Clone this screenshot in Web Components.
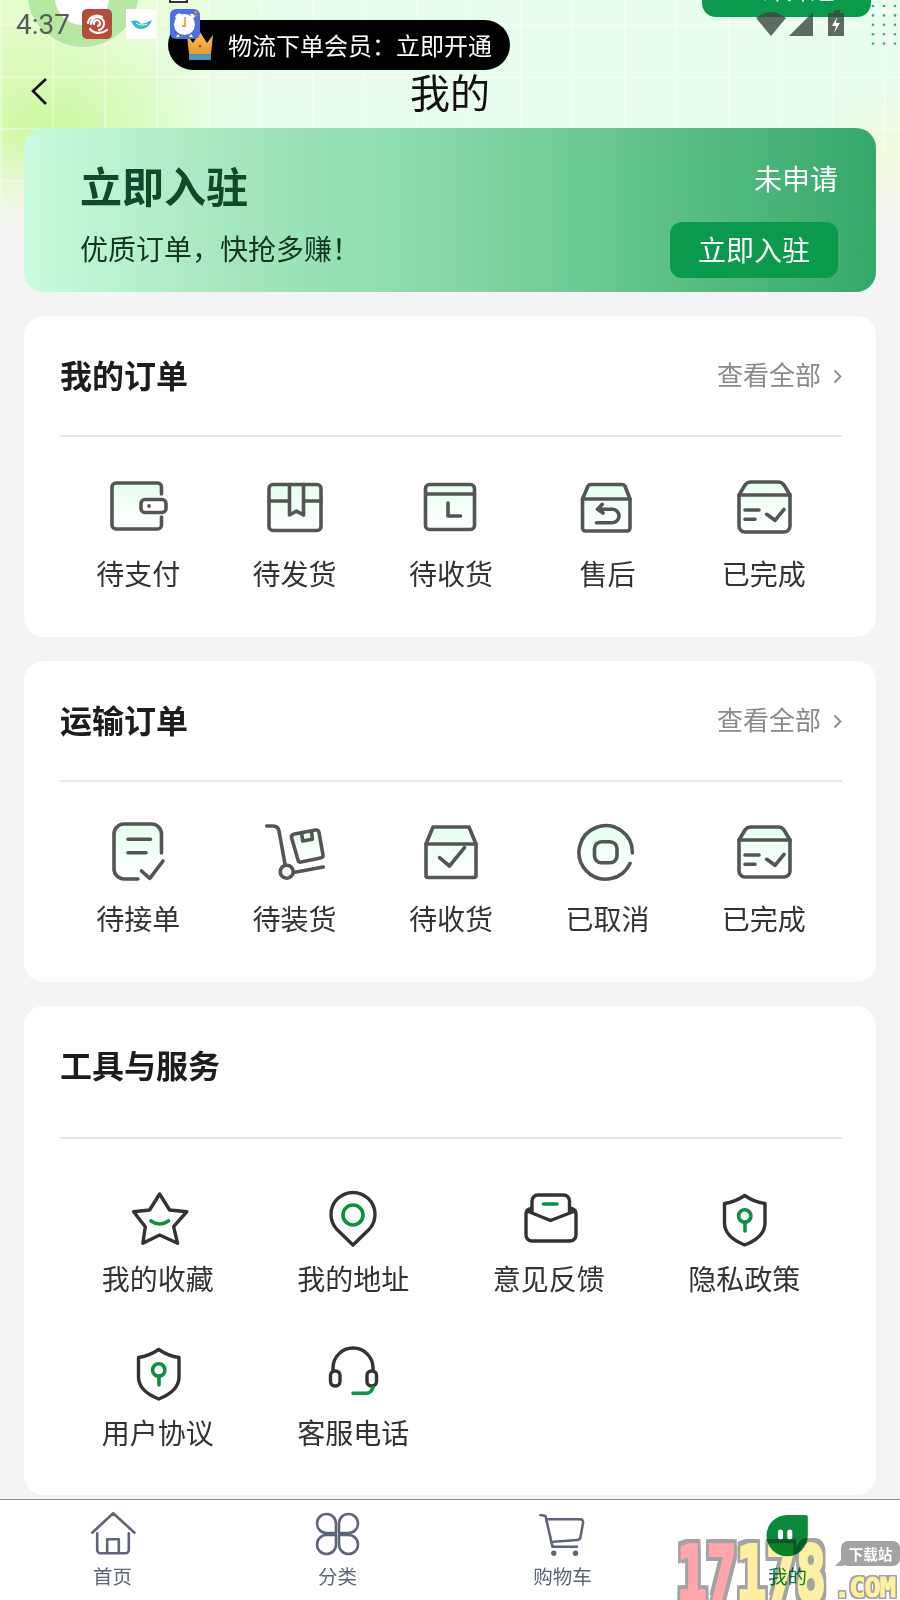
<!DOCTYPE html>
<html lang="zh">
<head>
<meta charset="utf-8">
<title>我的</title>
<style>
html, body { margin: 0; padding: 0; background: #f4f4f4; }
</style>
</head>
<body>
<x-app></x-app>

<script>
const FONT = `"Noto Sans CJK SC", "Noto Sans", sans-serif`;

const defs = `<defs><linearGradient id="m" x1="0" y1="0" x2="0" y2="1"><stop offset="0" stop-color="#e6fff0"/><stop offset="1" stop-color="#fff"/></linearGradient></defs>`;

const ICONS = {
  wallet: `<path class="m" d="M55.5 19V12a4 4 0 0 0-4-4H10a4 4 0 0 0-4 4V50a4 4 0 0 0 4 4H51.5a4 4 0 0 0 4-4V42"/>
    <rect x="35" y="24.5" width="25" height="13" rx="4" fill="#fff"/><circle cx="43" cy="31" r="1.9" fill="#555" stroke="none"/>`,
  parcel: `<rect class="m" x="6" y="9.5" width="52" height="46" rx="4"/><path d="M6 26H26.5M40.5 26H58M26.5 9.5V40L33.5 36L40.5 40V9.5"/>`,
  calendar: `<rect class="m" x="6.5" y="9.5" width="49" height="45" rx="4"/><path d="M6.5 19H55.5M29 28V41H41.5"/>`,
  returnbox: `<path class="m" d="M7.5 24L13 11Q14 9.5 16 9.5H47Q49 9.5 50 11L55 24V53a3 3 0 0 1-3 3H10.5a3 3 0 0 1-3-3Z"/><path d="M7.5 24H55M21.5 47.7H37.3a6.7 6.7 0 0 0 0-13.4H23M27.3 29.3L22.5 34.3L28 38"/>`,
  donebox: `<path class="m" d="M7 20L13 10Q15 7 19 7H46Q50 7 52 10L58 20V51a6 6 0 0 1-6 6H13a6 6 0 0 1-6-6Z"/><path d="M7 20H58M13 35H27M13 44.3H23M34.7 39.3L43 45.3L52 34.3"/>`,
  accept: `<path class="m" d="M55.5 33V14a10 10 0 0 0-10-10H18a10 10 0 0 0-10 10V49a10 10 0 0 0 10 10H32"/><path d="M22 19.3H44.5M22 32.7H40M35.5 51L43.8 58.3L57 41"/>`,
  trolley: `<path d="M3.7 6H10Q15 6 16 11L22 44"/><circle cx="23.7" cy="51.7" r="6.5"/><path d="M30.5 52.5L60.3 47"/><path class="m" d="M31.5 14L52.5 10Q55.5 9.5 56 12.5L60 35Q60.3 37.5 57.5 38L38 42Q35.5 42.5 35 40L28.5 17.5Q28 14.7 31.5 14Z"/><path d="M38.7 14L39.7 21L49.3 19.3L48.7 12.7"/>`,
  checkbox: `<path class="m" d="M7 24L14 7H50L57 24V56a1.5 1.5 0 0 1-1.5 1.5H8.5a1.5 1.5 0 0 1-1.5-1.5Z"/><path d="M7 24H57M20.5 37.7L30.5 46L45.5 27.7"/>`,
  cancel: `<circle cx="30.7" cy="32.3" r="26" fill="url(#m)" stroke="none"/><path d="M57.4 33A26.7 26.7 0 1 0 55 43.5"/><rect x="19.5" y="21.8" width="22.5" height="21" rx="7"/>`,
  star: `<path class="d" d="M33.6 6L43.6 22L60.9 23.7L47.6 38.7L51.6 55.3L33.6 47L16.9 55.3L19.3 38.7L7.6 23.7L23.6 22Z"/><path class="g" d="M25 33Q33.6 39 42.5 33"/>`,
  pin: `<path class="d" d="M32 57L15.5 41A22 22 0 1 1 48.5 41Z"/><circle class="g" cx="32" cy="27" r="10"/>`,
  mail: `<path class="d" d="M15 20L12 21Q9 22 9 26V47a6 6 0 0 0 6 6H53a6 6 0 0 0 6-6V26Q59 22 56 21L52.6 20M10 23L33.5 32.5L58 23M15 24V13a6 6 0 0 1 6-6H46.5a6 6 0 0 1 6 6V24"/><path class="g" stroke-width="4" d="M26.5 16H40"/>`,
  shield: `<path class="d" d="M32.75 7.5Q23 14 12.5 15.5V35Q12.5 49 32.75 57Q53 49 53 35V15.5Q42 14 32.75 7.5Z"/><circle class="g" cx="32.75" cy="28" r="6.2"/><path class="g" stroke-width="4.5" d="M33 34V43"/>`,
  headset: `<path class="d" d="M12 28.7V26a20 20 0 0 1 40 0V28.7"/><rect class="d" x="9.5" y="29" width="9.5" height="15" rx="4.5"/><rect class="d" x="46" y="29" width="9.5" height="15" rx="4.5"/><path class="g" stroke-width="4" d="M52 45.5Q50 51.3 45.5 51.3H32"/>`
};

const TAB_ICONS = {
  home: `<path d="M4.2 23.7L25.2 4.3L46.5 23.7M9.2 24.3V41a3.3 3.3 0 0 0 3.3 3.3H37.5a3.3 3.3 0 0 0 3.3-3.3V24.3M19.2 44.3V30.3H30.8V44.3"/>`,
  clover: `<path id="p" d="M23 24H13.5A9.5 9.5 0 1 1 23 14.5Z"/><use href="#p" transform="matrix(-1 0 0 1 49 0)"/><use href="#p" transform="matrix(1 0 0 -1 0 50)"/><use href="#p" transform="matrix(-1 0 0 -1 49 50)"/>`,
  cart: `<path d="M2.5 6L7.5 7L14.5 37.7H39M9 10.3H42Q45.5 10.3 45 14L42.5 28Q42 31 39 31L15.8 32.7"/><circle cx="15.8" cy="44.3" r="2.7" fill="#5d6577" stroke="none"/><circle cx="37.5" cy="44.3" r="2.7" fill="#5d6577" stroke="none"/>`,
  leaf: `<path d="M42.8 6Q44.8 6 44.8 8V26.7A20.65 20.65 0 1 1 24.15 6Z" fill="#0a8a3a" stroke="none"/><rect x="15" y="20.5" width="5" height="10" rx="2.5" fill="#fff" stroke="none"/><rect x="24.3" y="20.5" width="5" height="10" rx="2.5" fill="#fff" stroke="none"/>`
};

class XIcon extends HTMLElement {
  connectedCallback() {
    const name = this.getAttribute('name');
    const root = this.shadowRoot || this.attachShadow({ mode: 'open' });
    root.innerHTML = `
      <style>
        :host { display: block; width: 64px; height: 64px; }
        svg { display: block; fill: none; stroke: #555; stroke-width: 3.6; stroke-linecap: round; stroke-linejoin: round; }
        .m { fill: url(#m); }
        .d { stroke: #333; stroke-width: 3.4; fill: none; }
        .g { stroke: #0a9040; stroke-width: 3.6; fill: none; }
      </style>
      <svg width="64" height="64" viewBox="0 0 64 64">${defs}${ICONS[name]}</svg>`;
  }
}

class XItem extends HTMLElement {
  connectedCallback() {
    const root = this.shadowRoot || this.attachShadow({ mode: 'open' });
    root.innerHTML = `
      <style>
        :host { display: flex; flex-direction: column; align-items: center; }
        .label { font: 400 28px/40px ${FONT}; color: var(--label, #333); white-space: nowrap; margin-top: var(--label-gap, 14px); }
      </style>
      <x-icon name="${this.getAttribute('icon')}"></x-icon>
      <div class="label">${this.getAttribute('label')}</div>`;
  }
}

class XCard extends HTMLElement {
  connectedCallback() {
    const more = this.hasAttribute('more');
    const root = this.shadowRoot || this.attachShadow({ mode: 'open' });
    root.innerHTML = `
      <style>
        :host { display: block; background: #fff; border-radius: 20px; padding: 0 34px 0 36px; }
        header { height: var(--head, 121px); box-sizing: border-box; padding-bottom: var(--head-pad, 4px); display: flex; align-items: center; justify-content: space-between; border-bottom: 2px solid #e7e7e7; }
        h2 { margin: 0; font: 700 32px/44px ${FONT}; color: #1d1d1d; }
        .more { display: flex; align-items: center; gap: 12px; font: 400 26px/36px ${FONT}; color: #8a8a8a; }
        .more svg { display: block; margin-top: 5px; }
      </style>
      <header>
        <h2>${this.getAttribute('heading')}</h2>
        ${more ? `<div class="more">查看全部<svg width="9" height="15" viewBox="0 0 9 15"><path d="M1.5 1.5L7.5 7.5L1.5 13.5" fill="none" stroke="#8a8a8a" stroke-width="1.8"/></svg></div>` : ''}
      </header>
      <slot></slot>`;
  }
}

class XGrid extends HTMLElement {
  connectedCallback() {
    const root = this.shadowRoot || this.attachShadow({ mode: 'open' });
    root.innerHTML = `
      <style>
        :host { display: grid; grid-template-columns: repeat(${this.getAttribute('cols')}, 1fr); row-gap: var(--row-gap, 0); padding: var(--grid-pad, 38px 0 44px); }
      </style>
      <slot></slot>`;
  }
}

class XBanner extends HTMLElement {
  constructor() {
    super();
    this.attachShadow({ mode: 'open' }).innerHTML = `
      <style>
        :host { display: flex; justify-content: space-between; height: 164px; box-sizing: border-box; border-radius: 20px; padding: 28px 38px 14px 56px; background: linear-gradient(90deg, #c9fbdf 0%, #a4e6bf 25%, #86d7a8 50%, #5cc186 75%, #35a96a 100%); }
        .left, .right { display: flex; flex-direction: column; justify-content: space-between; }
        .right { align-items: flex-end; }
        .title { font: 700 42px/60px ${FONT}; color: #0f4a2c; margin-top: -1px; }
        .sub { font: 400 28px/40px ${FONT}; color: #12361f; margin-bottom: 10px; white-space: nowrap; }
        .state { font: 400 28px/44px ${FONT}; color: #fff; }
        .btn { width: 168px; height: 56px; border-radius: 12px; background: #0b9a4b; color: #fff; font: 400 28px/54px ${FONT}; text-align: center; }
      </style>
      <div class="left"><div class="title">立即入驻</div><div class="sub">优质订单，快抢多赚！</div></div>
      <div class="right"><div class="state">未申请</div><div class="btn">立即入驻</div></div>`;
  }
}

class XNav extends HTMLElement {
  constructor() {
    super();
    this.attachShadow({ mode: 'open' }).innerHTML = `
      <style>
        :host { display: grid; grid-template-columns: 1fr auto 1fr; align-items: center; height: 128px; box-sizing: border-box; padding: 71px 0 17px; color: #111; }
        svg { display: block; margin-left: 6px; }
        .title { font: 400 40px/40px ${FONT}; }
      </style>
      <svg width="18" height="30" viewBox="0 0 18 30"><path d="M16 3L3 15L16 28" fill="none" stroke="#111" stroke-width="2.6"/></svg>
      <div class="title">我的</div>`;
  }
}

class XTab extends HTMLElement {
  connectedCallback() {
    const active = this.hasAttribute('active');
    const root = this.shadowRoot || this.attachShadow({ mode: 'open' });
    root.innerHTML = `
      <style>
        :host { display: flex; flex: 1; flex-direction: column; align-items: center; padding-top: 9px; }
        svg { display: block; fill: none; stroke: #5d6577; stroke-width: 2.6; stroke-linecap: round; stroke-linejoin: round; }
        .label { font: 400 19.5px/28px ${FONT}; color: ${active ? '#0b8f3f' : '#5d6577'}; margin-top: 3px; }
      </style>
      <svg width="50" height="50" viewBox="0 0 50 50">${TAB_ICONS[this.getAttribute('icon')]}</svg>
      <div class="label">${this.getAttribute('label')}</div>`;
  }
}

class XTabbar extends HTMLElement {
  constructor() {
    super();
    this.attachShadow({ mode: 'open' }).innerHTML = `
      <style>
        :host { display: flex; height: 101px; box-sizing: border-box; background: #fff; border-top: 1px solid #8a8a8a; }
      </style>
      <slot></slot>`;
  }
}

// status bar, notification pill and the clipped button are overlays on the page top
class XStatus extends HTMLElement {
  constructor() {
    super();
    const dots = [];
    for (let r = 0; r < 5; r++) for (let c = 0; c < 3; c++) dots.push(`<circle cx="${5 + c * 11}" cy="${6 + r * 9.4}" r="1.3"/>`);
    this.attachShadow({ mode: 'open' }).innerHTML = `
      <style>
        :host { position: absolute; left: 0; top: 0; width: 900px; height: 80px; overflow: hidden; display: block; }
        .time { position: absolute; left: 16px; top: 8px; font: 400 28px/34px Roboto, sans-serif; color: #555f55; }
        .app { position: absolute; top: 9px; width: 30px; height: 30px; display: block; }
        .mark { position: absolute; left: 169px; top: -12px; width: 15px; height: 11px; border: 2px solid #333; background: #fff; }
        .pill { position: absolute; left: 168px; top: 20px; width: 342px; height: 50px; border-radius: 25px; background: #000; color: #fff; font: 400 24px/50px ${FONT}; padding-left: 60px; box-sizing: border-box; white-space: nowrap; }
        .crown { position: absolute; left: 16px; top: 10px; }
        .green { position: absolute; left: 702px; top: -40px; width: 169px; height: 57px; background: #0b9a4b; border-radius: 0 0 14px 14px; color: #fff; font: 400 24px/58px ${FONT}; text-align: center; }
        .sys { position: absolute; left: 750px; top: 6px; }
        .dots { position: absolute; left: 868px; top: 0; fill: #3caa8a; }
      </style>
      <div class="green">立即开通</div>
      <div class="time">4:37</div>
      <svg class="app" style="left:82px" viewBox="0 0 30 30"><rect width="30" height="30" rx="5" fill="#b34e3c"/><path d="M6 14C7 7 15 5 20 8M9 15a6.5 6.5 0 1 1 8 6M12 15a3 3 0 1 1 4 2M8 20C12 25 20 25 25 21" fill="none" stroke="#fff" stroke-width="2.2" stroke-linecap="round"/></svg>
      <svg class="app" style="left:126px" viewBox="0 0 30 30"><rect width="30" height="30" fill="#fff"/><path d="M5 12Q12 10 15 15Q21 14 26 11Q23 20 14 20Q8 19 5 12Z" fill="#2cb9c9"/><path d="M10 14Q14 17 21 15.5" fill="none" stroke="#fff" stroke-width="1"/></svg>
      <div class="mark"></div>
      <div class="pill">
        <svg class="crown" width="32" height="32" viewBox="0 0 32 32"><defs><linearGradient id="c" x1="0" y1="0" x2="0" y2="1"><stop offset="0" stop-color="#f7c24c"/><stop offset="1" stop-color="#e89b2f"/></linearGradient></defs><path d="M3 5L9 13L16 2L23 13L29 5L27 24H5Z" fill="url(#c)"/><circle cx="16" cy="16" r="1.6" fill="#d8492f"/><rect x="5" y="24" width="22" height="6" rx="1" fill="#4f93b8"/></svg>
        物流下单会员：立即开通
      </div>
      <svg class="app" style="left:170px" viewBox="0 0 30 30"><rect width="30" height="30" rx="6" fill="#4f6ee0"/><path d="M5 8Q7 3 12 5L7 11ZM20 5Q24 4 25 8L22 10Z" fill="#fff"/><circle cx="14.5" cy="15.5" r="10.5" fill="#fff"/><path d="M8 25L6 28H10ZM21 25L23 28H19Z" fill="#fff"/><path d="M15 8V17H12" fill="none" stroke="#e9a83a" stroke-width="1.8"/><path d="M24 3h3l-3 4h3" fill="none" stroke="#e9a83a" stroke-width="1"/></svg>
      <svg class="sys" width="100" height="32" viewBox="0 0 100 32">
        <g fill="#3a463e" fill-opacity=".8">
          <path d="M6 12Q21 0 36 12L21 30Z"/>
          <path d="M39 30L63 6V30Z"/>
          <path d="M78 7H84V4H90V7H94V30H78Z"/>
        </g>
        <path d="M87 11L82 20H86L84 27L90 17H86Z" fill="#fff"/>
      </svg>
      <svg class="dots" width="32" height="50" viewBox="0 0 32 50">${dots.join('')}</svg>`;
  }
}

class XWatermark extends HTMLElement {
  constructor() {
    super();
    const blocky = n => `${n}px 0 #a3a3a3, -${n}px 0 #a3a3a3, 0 ${n}px #a3a3a3, 0 -${n}px #a3a3a3, ${n}px ${n}px #a3a3a3, -${n}px ${n}px #a3a3a3, ${n}px -${n}px #a3a3a3, -${n}px -${n}px #a3a3a3`;
    this.attachShadow({ mode: 'open' }).innerHTML = `
      <style>
        :host { position: absolute; left: 674px; top: 1535px; width: 226px; height: 65px; overflow: hidden; display: block; mix-blend-mode: multiply; }
        .n { position: absolute; left: 3px; top: 1px; font: 700 76px/78px "DejaVu Sans Mono", monospace; transform: scaleX(.65); transform-origin: 0 0; white-space: nowrap; -webkit-text-stroke-width: 4px; text-shadow: ${blocky(6)}; }
        .p { color: #ffa6ad; -webkit-text-stroke-color: #ffa6ad; }
        .y { color: #fdf0a2; -webkit-text-stroke-color: #fdf0a2; }
        .com { position: absolute; left: 160px; top: 38px; font: 700 27px/30px "DejaVu Sans Mono", monospace; letter-spacing: -1px; color: #fdf0a2; -webkit-text-stroke: 1px #fdf0a2; text-shadow: ${blocky(2)}; white-space: nowrap; }
        .tag { position: absolute; left: 167px; top: 6px; width: 59px; height: 25px; border-radius: 7px; background: #a3a3a3; color: #fff; font: 700 14.5px/25px ${FONT}; text-align: center; }
        .tag::after { content: ""; position: absolute; left: -6px; top: 16px; border-right: 9px solid #a3a3a3; border-top: 9px solid transparent; }
      </style>
      <div class="n"><span class="p">17</span><span class="y">178</span></div>
      <div class="tag">下载站</div>
      <div class="com">.COM</div>`;
  }
}

class XApp extends HTMLElement {
  constructor() {
    super();
    this.attachShadow({ mode: 'open' }).innerHTML = `
      <style>
        :host { display: block; position: relative; width: 900px; height: 1600px; overflow: hidden; background: #f4f4f4; }
        .bg { position: absolute; left: 0; top: 0; width: 900px; height: 234px;
          background:
            linear-gradient(to bottom, rgba(244,244,244,0) 60%, #f4f4f4 100%),
            repeating-linear-gradient(90deg, rgba(255,255,255,.35) 0 2px, transparent 2px 52px),
            repeating-linear-gradient(0deg, rgba(255,255,255,.35) 0 2px, transparent 2px 52px),
            radial-gradient(ellipse 170px 110px at 50px 125px, #cdf9a2 0%, rgba(205,249,162,0) 100%),
            radial-gradient(ellipse 110px 90px at 900px 170px, #f3fbd5 0%, rgba(243,251,213,0) 100%),
            linear-gradient(100deg, #e4fcc7 0%, #e8fdee 32%, #e8fdee 100%);
        }
        .ring { position: absolute; left: 27px; top: -65px; width: 112px; height: 112px; border-radius: 50%; background: #b5e8a0; box-shadow: 0 0 0 1.5px #e6fbdc; }
        .ring::after { content: ""; position: absolute; left: 28px; top: 36px; width: 54px; height: 54px; border-radius: 50%; background: #fff; }
        main { position: relative; padding: 0 24px; display: flex; flex-direction: column; gap: 24px; }
        x-nav { margin-bottom: -24px; }
        .tools { --head: 133px; --head-pad: 16px; }
        .tools x-grid { --grid-pad: 49px 0 43px; --row-gap: 44px; --label-gap: 6px; }
        x-tabbar { position: absolute; left: 0; right: 0; bottom: 0; }
      </style>
      <div class="bg"></div>
      <div class="ring"></div>
      <main>
        <x-nav></x-nav>
        <x-banner></x-banner>
        <x-card heading="我的订单" more>
          <x-grid cols="5">
            <x-item icon="wallet" label="待支付"></x-item>
            <x-item icon="parcel" label="待发货"></x-item>
            <x-item icon="calendar" label="待收货"></x-item>
            <x-item icon="returnbox" label="售后"></x-item>
            <x-item icon="donebox" label="已完成"></x-item>
          </x-grid>
        </x-card>
        <x-card heading="运输订单" more>
          <x-grid cols="5">
            <x-item icon="accept" label="待接单"></x-item>
            <x-item icon="trolley" label="待装货"></x-item>
            <x-item icon="checkbox" label="待收货"></x-item>
            <x-item icon="cancel" label="已取消"></x-item>
            <x-item icon="donebox" label="已完成"></x-item>
          </x-grid>
        </x-card>
        <x-card class="tools" heading="工具与服务">
          <x-grid cols="4">
            <x-item icon="star" label="我的收藏"></x-item>
            <x-item icon="pin" label="我的地址"></x-item>
            <x-item icon="mail" label="意见反馈"></x-item>
            <x-item icon="shield" label="隐私政策"></x-item>
            <x-item icon="shield" label="用户协议"></x-item>
            <x-item icon="headset" label="客服电话"></x-item>
          </x-grid>
        </x-card>
      </main>
      <x-tabbar>
        <x-tab icon="home" label="首页"></x-tab>
        <x-tab icon="clover" label="分类"></x-tab>
        <x-tab icon="cart" label="购物车"></x-tab>
        <x-tab icon="leaf" label="我的" active></x-tab>
      </x-tabbar>
      <x-status></x-status>
      <x-watermark></x-watermark>`;
  }
}

customElements.define('x-icon', XIcon);
customElements.define('x-item', XItem);
customElements.define('x-card', XCard);
customElements.define('x-grid', XGrid);
customElements.define('x-banner', XBanner);
customElements.define('x-nav', XNav);
customElements.define('x-tab', XTab);
customElements.define('x-tabbar', XTabbar);
customElements.define('x-status', XStatus);
customElements.define('x-watermark', XWatermark);
customElements.define('x-app', XApp);
</script>
</body>
</html>
